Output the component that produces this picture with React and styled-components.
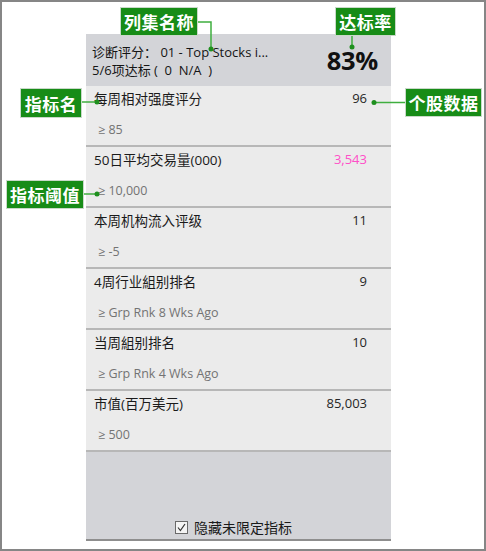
import React from "react";
import styled, { createGlobalStyle } from "styled-components";

const Global = createGlobalStyle`
  html, body { margin: 0; padding: 0; background: #ffffff; }
  body { font-family: "Open Sans", "Noto Sans CJK SC", sans-serif; }
`;

const Frame = styled.div`
  position: relative;
  width: 486px;
  height: 551px;
  box-sizing: border-box;
  border: 2px solid #868686;
  padding: 32px 0 0 84px;
  background: #fff;
  overflow: hidden;
`;

const Panel = styled.div`
  width: 305px;
  display: flex;
  flex-direction: column;
`;

const Header = styled.div`
  height: 52px;
  background: #d3d4d8;
  display: flex;
  align-items: center;
  justify-content: space-between;
  padding: 0 13px 0 6px;
  box-sizing: border-box;
`;

const HeaderText = styled.div`
  display: flex;
  flex-direction: column;
  font-size: 13px;
  line-height: 17.5px;
  color: #151515;
  padding-top: 3px;
  white-space: pre;
`;

const Rate = styled.div`
  font-size: 25.5px;
  font-weight: 700;
  color: #111;
  letter-spacing: -0.3px;
  padding-top: 0;
`;

const Row = styled.div`
  height: 61px;
  background: #ebebeb;
  border-bottom: 2px solid #b7b7b7;
  display: flex;
  flex-direction: column;
  padding: 2px 24px 0 8px;
  box-sizing: border-box;
`;

const RowTop = styled.div`
  display: flex;
  justify-content: space-between;
  align-items: center;
  height: 20px;
  font-size: 13.5px;
  color: #1a1a1a;
`;

const Value = styled.span`
  font-size: 13px;
  color: ${(p) => (p.$fail ? "#ff4fc8" : "#262626")};
`;

const Threshold = styled.div`
  margin-top: 12px;
  padding-left: 4px;
  font-size: 12.5px;
  line-height: 20px;
  color: #737373;
`;

const Footer = styled.div`
  height: 89px;
  background: #d3d4d8;
  border-bottom: 2px solid #8e8e8e;
  display: flex;
  align-items: flex-end;
  justify-content: center;
  padding-bottom: 2px;
  box-sizing: border-box;
`;

const CheckLabel = styled.label`
  display: flex;
  align-items: center;
  gap: 6px;
  font-size: 14px;
  color: #1a1a1a;
  margin-left: -10px;
`;

const Box = styled.span`
  width: 11px;
  height: 11px;
  border: 1px solid #6a6a6a;
  background: #f4f4f4;
  display: flex;
  align-items: center;
  justify-content: center;
`;

const Callout = styled.div`
  position: absolute;
  left: ${(p) => p.$x}px;
  top: ${(p) => p.$y}px;
  width: ${(p) => p.$w}px;
  height: ${(p) => p.$h}px;
  box-sizing: border-box;
  background: #178c17;
  outline: 1px solid #c9d9c9;
  color: #fff;
  font-family: "Noto Sans CJK SC", sans-serif;
  font-weight: 700;
  font-size: 17px;
  display: flex;
  align-items: center;
  justify-content: center;
  letter-spacing: 0.5px;
`;

const Leader = styled.svg`
  position: absolute;
  left: 0;
  top: 0;
  pointer-events: none;
`;

const rows = [
  { name: "每周相对强度评分", value: "96", th: "≥ 85" },
  { name: "50日平均交易量(000)", value: "3,543", th: "≥ 10,000", fail: true },
  { name: "本周机构流入评级", value: "11", th: "≥ -5" },
  { name: "4周行业組别排名", value: "9", th: "≥ Grp Rnk 8 Wks Ago" },
  { name: "当周組别排名", value: "10", th: "≥ Grp Rnk 4 Wks Ago" },
  { name: "市值(百万美元)", value: "85,003", th: "≥ 500" },
];

export default function App() {
  return (
    <>
      <Global />
      <Frame>
        <Panel>
          <Header>
            <HeaderText>
              <span>诊断评分： 01 - Top Stocks i...</span>
              <span>5/6项达标 (  0  N/A  )</span>
            </HeaderText>
            <Rate>83%</Rate>
          </Header>
          {rows.map((r) => (
            <Row key={r.name}>
              <RowTop>
                <span>{r.name}</span>
                <Value $fail={r.fail}>{r.value}</Value>
              </RowTop>
              <Threshold>{r.th}</Threshold>
            </Row>
          ))}
          <Footer>
            <CheckLabel>
              <Box>
                <svg width="9" height="9" viewBox="0 0 9 9">
                  <path d="M1 4.5 L3.4 7.5 L8 1" fill="none" stroke="#333" strokeWidth="1.2" />
                </svg>
              </Box>
              隐藏未限定指标
            </CheckLabel>
          </Footer>
        </Panel>

        <Leader width="486" height="551" viewBox="0 0 486 551">
          <g stroke="#3fae3f" strokeWidth="1.5" fill="none">
            <polyline points="194,20 209,20 209,47" />
            <line x1="350" y1="33" x2="350" y2="45" />
            <line x1="79" y1="100" x2="95" y2="100" />
            <line x1="372" y1="100.5" x2="404" y2="100.5" />
            <line x1="81" y1="192" x2="95" y2="192" />
          </g>
          <g fill="#1e8f1e">
            <circle cx="209" cy="47" r="2.5" />
            <circle cx="350" cy="45" r="2.5" />
            <circle cx="95" cy="100" r="2.5" />
            <circle cx="372" cy="100.5" r="2.5" />
            <circle cx="95" cy="192" r="2.5" />
          </g>
        </Leader>

        <Callout $x={119} $y={6} $w={76} $h={27}>列集名称</Callout>
        <Callout $x={334} $y={6} $w={59} $h={27}>达标率</Callout>
        <Callout $x={19} $y={87} $w={60} $h={28}>指标名</Callout>
        <Callout $x={404} $y={87} $w={75} $h={27}>个股数据</Callout>
        <Callout $x={5} $y={179} $w={76} $h={27}>指标阈值</Callout>
      </Frame>
    </>
  );
}
